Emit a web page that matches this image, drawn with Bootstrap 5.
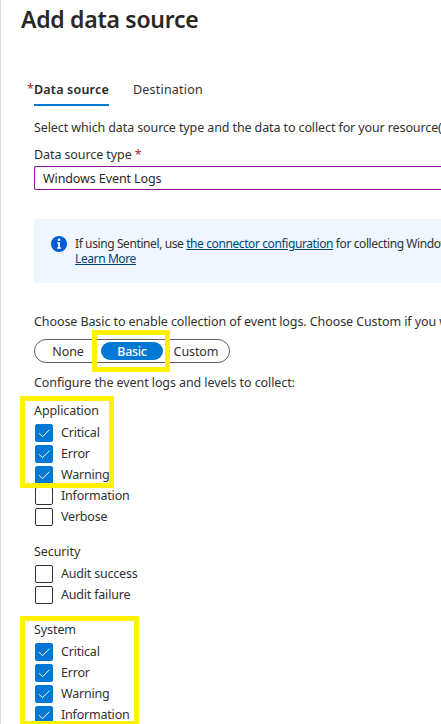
<!DOCTYPE html>
<html lang="en">
<head>
<meta charset="utf-8">
<meta name="viewport" content="width=device-width, initial-scale=1">
<title>Add data source</title>
<link href="https://cdn.jsdelivr.net/npm/bootstrap@5.3.0/dist/css/bootstrap.min.css" rel="stylesheet">
<style>
body{font-family:"Noto Sans","Open Sans",sans-serif;font-size:12.5px;letter-spacing:-.09px;line-height:18px;color:#323130;width:441px;height:724px;overflow:hidden;background:#fff}
.blade{height:724px;padding-left:33px;border-left:1px solid #dcdcdc;overflow:hidden}
.ln{white-space:nowrap;height:18px}
.lead-in{letter-spacing:-.11px}
.blade-title{font-size:23px;font-weight:600;letter-spacing:-.28px;line-height:32px;height:32px;margin:3px 0 0 -13px;color:#292827;white-space:nowrap}
.tabs{margin-top:45px;height:26px;gap:24px}
.tabs .nav-link{padding:1px 0 0;color:#323130;height:26px;line-height:18px;letter-spacing:.2px}
.tabs .nav-link.active{font-weight:600;border-bottom:2px solid #0078d4;width:75px;color:#292827}
.req{color:#a4262c}
.tab-req{left:-7px;top:0}
.source-input{height:24px;border:1px solid #881798;border-right:0;border-radius:2px 0 0 2px;padding:1px 8px 0;line-height:22px;color:#292827;margin-top:2px;letter-spacing:-.1px}
.info{height:64px;margin-top:29px;background:#eff6ff;border-radius:2px 0 0 2px;padding:17px 0 0 17px;gap:8px;line-height:15px;font-size:12px;letter-spacing:-.4px}
.info a{color:#004578;text-decoration:underline}
.info .ln{height:15px}
.pick{width:196px;height:24px;border:1px solid #605e5c;border-radius:12px;margin-top:8px}
.pick .opt{line-height:19px;height:18px;text-align:center}
.pick .opt-side{width:66px}
.pick .chosen{background:#0078d4;color:#fff;border-radius:9px;width:62px;font-weight:500;letter-spacing:-.3px}
.frame{border:5px solid #fff200;pointer-events:none}
.f-basic{left:57px;top:-10px;width:78px;height:42px}
.f-app{left:-14px;top:-6px;width:94px;height:92px}
.f-sys{left:-14px;top:-5px;width:119px;height:108px;border-bottom-width:3px}
.levels{margin-top:4px}
.group-gap{margin-top:14px}
.lvl{height:21px;gap:8px;margin-left:1px;white-space:nowrap;letter-spacing:-.2px}
.box{width:18px;height:18px;border:1px solid #323130;border-radius:2px;flex:none;background:#fff}
.box.on{background:#0078d4;border-color:#0078d4}
.box svg{display:block;width:16px;height:16px}
</style>
<script src="https://cdn.jsdelivr.net/npm/bootstrap@5.3.0/dist/js/bootstrap.bundle.min.js"></script>
</head>
<body>
<main class="blade">
<h1 class="blade-title">Add data source</h1>
<nav class="nav tabs position-relative flex-nowrap">
<span class="req tab-req position-absolute">*</span>
<a class="nav-link active" href="#">Data source</a>
<a class="nav-link" href="#">Destination</a>
</nav>
<div class="ln lead-in" style="margin-top:13px">Select which data source type and the data to collect for your resource(s)</div>
<div class="ln" style="margin-top:9px">Data source type <span class="req">*</span></div>
<div class="source-input">Windows Event Logs</div>
<div class="info d-flex">
<svg width="16" height="16" viewBox="0 0 16 16" class="flex-shrink-0"><circle cx="8" cy="8" r="8" fill="#015cda"/><circle cx="8" cy="3.7" r="1.3" fill="#fff"/><path d="M6.2 6.3H9v5.2h1.1v1.2H6v-1.2h1.1V7.4h-.9z" fill="#fff"/></svg>
<div><div class="ln">If using Sentinel, use <a href="#">the connector configuration</a> for collecting Windows</div><div class="ln"><a href="#">Learn More</a></div></div>
</div>
<div class="ln" style="margin-top:30px">Choose Basic to enable collection of event logs. Choose Custom if you want</div>
<div class="pick position-relative d-flex align-items-center"><span class="opt opt-side">None</span><span class="opt chosen">Basic</span><span class="opt opt-side">Custom</span><span class="frame f-basic position-absolute"></span></div>
<div class="ln" style="margin-top:11px">Configure the event logs and levels to collect:</div>
<section class="position-relative" style="margin-top:10px">
<div class="ln">Application</div>
<div class="levels">
<div class="lvl d-flex"><span class="box on"><svg viewBox="0 0 16 16"><path d="M3 8.2l3.5 3.5 7-7" fill="none" stroke="#fff"/></svg></span>Critical</div>
<div class="lvl d-flex"><span class="box on"><svg viewBox="0 0 16 16"><path d="M3 8.2l3.5 3.5 7-7" fill="none" stroke="#fff"/></svg></span>Error</div>
<div class="lvl d-flex"><span class="box on"><svg viewBox="0 0 16 16"><path d="M3 8.2l3.5 3.5 7-7" fill="none" stroke="#fff"/></svg></span>Warning</div>
<div class="lvl d-flex"><span class="box"></span>Information</div>
<div class="lvl d-flex"><span class="box"></span>Verbose</div>
</div>
<span class="frame f-app position-absolute"></span>
</section>
<section class="group-gap">
<div class="ln">Security</div>
<div class="levels">
<div class="lvl d-flex"><span class="box"></span>Audit success</div>
<div class="lvl d-flex"><span class="box"></span>Audit failure</div>
</div>
</section>
<section class="position-relative group-gap">
<div class="ln">System</div>
<div class="levels">
<div class="lvl d-flex"><span class="box on"><svg viewBox="0 0 16 16"><path d="M3 8.2l3.5 3.5 7-7" fill="none" stroke="#fff"/></svg></span>Critical</div>
<div class="lvl d-flex"><span class="box on"><svg viewBox="0 0 16 16"><path d="M3 8.2l3.5 3.5 7-7" fill="none" stroke="#fff"/></svg></span>Error</div>
<div class="lvl d-flex"><span class="box on"><svg viewBox="0 0 16 16"><path d="M3 8.2l3.5 3.5 7-7" fill="none" stroke="#fff"/></svg></span>Warning</div>
<div class="lvl d-flex"><span class="box on"><svg viewBox="0 0 16 16"><path d="M3 8.2l3.5 3.5 7-7" fill="none" stroke="#fff"/></svg></span>Information</div>
</div>
<span class="frame f-sys position-absolute"></span>
</section>
</main>
</body>
</html>
